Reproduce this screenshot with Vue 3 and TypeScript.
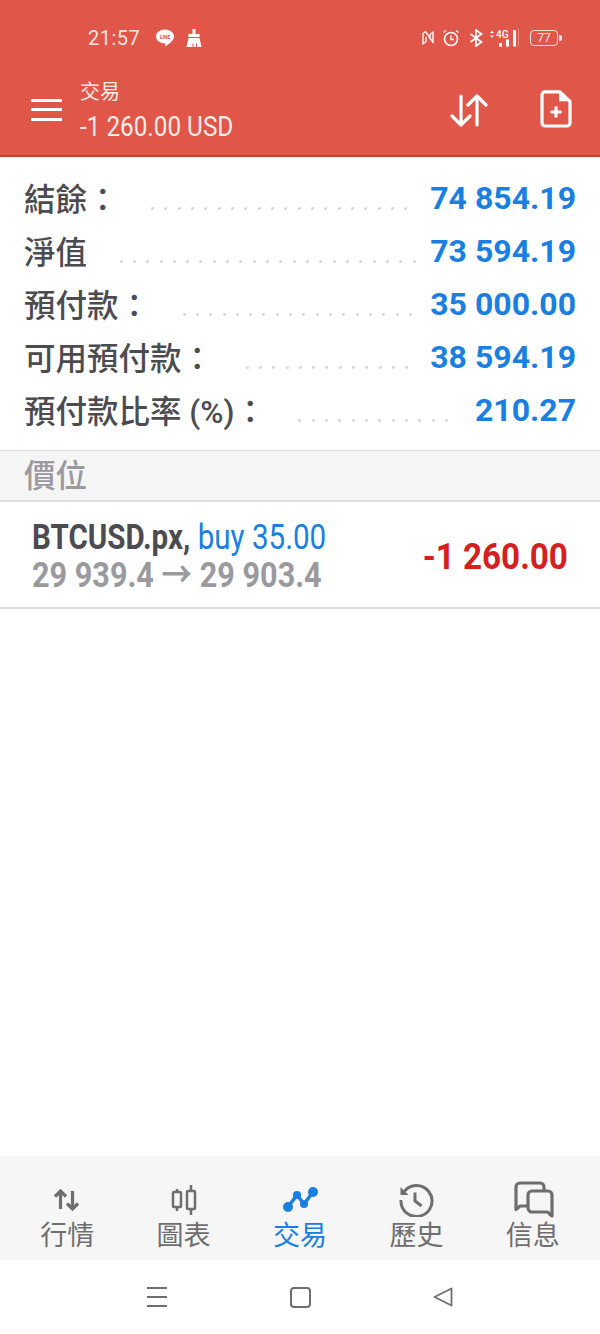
<script setup lang="ts">
interface Row {
  label: string
  value: string
  dots: number
}

const rows: Row[] = [
  { label: '結餘：', value: '74 854.19', dots: 20 },
  { label: '淨值', value: '73 594.19', dots: 23 },
  { label: '預付款：', value: '35 000.00', dots: 18 },
  { label: '可用預付款：', value: '38 594.19', dots: 13 },
  { label: '預付款比率 (%)：', value: '210.27', dots: 12 },
]
</script>

<template>
  <div class="screen">
    <header class="header">
      <div class="status">
        <span class="time">21:57</span>
        <svg class="st-line" viewBox="0 0 20 20" width="20" height="20">
          <path d="M10 1.500c5 0 9 3 9 7 0 3.800-4.500 7-8 9.500-.8.500-1 0-.8-1l.1-1.500C5 15.500 1 12.500 1 8.500c0-4 4-7 9-7z" fill="#fff" />
          <text x="10" y="10.500" text-anchor="middle" class="line-text">LINE</text>
        </svg>
        <svg class="st-brush" viewBox="0 0 16 20" width="16" height="20">
          <path d="M6.500 1h3v5h4v3h-11V6h4zM2.500 10h11l2 9H11v-3.500h-1V19H7.500v-3.500h-1V19H.5z" fill="#fff" />
        </svg>
        <div class="st-right">
          <svg viewBox="0 0 14 18" width="14" height="18" class="st-n">
            <path d="M2 4.500V15l3-2.500V8M2 4.500l2.500-2L12 13.500V3L9 5.500v5" fill="none" stroke="#fff" stroke-width="1.500" stroke-linejoin="round" opacity=".9" />
          </svg>
          <svg viewBox="0 0 18 18" width="18" height="18" class="st-alarm">
            <circle cx="9" cy="10" r="6.500" fill="none" stroke="#fff" stroke-width="1.600" />
            <path d="M9 6.500V10.500h3M1.500 3.500l2.500-2M16.500 3.500l-2.500-2" fill="none" stroke="#fff" stroke-width="1.400" />
          </svg>
          <svg viewBox="0 0 14 18" width="14" height="18" class="st-bt">
            <path d="M1.500 5l11 8-5.500 4V1l5.500 4-11 8" fill="none" stroke="#fff" stroke-width="1.700" />
          </svg>
          <div class="st-signal">
            <svg viewBox="0 0 32 20" width="32" height="20">
              <path d="M3 5l2-2.500L7 5zM3 7.500l2 2.500 2-2.500z" fill="#fff" />
              <text x="9" y="10" class="g-text">4G</text>
              <rect x="12" y="15" width="3" height="3.600" fill="#fff" />
              <rect x="19" y="11.500" width="3" height="7.100" fill="#fff" />
              <rect x="26" y="2" width="3" height="16.600" fill="#fff" />
              <rect x="31" y="1.500" width="1.500" height="17" fill="#fff" opacity=".3" />
            </svg>
          </div>
          <div class="battery"><span>77</span></div>
        </div>
      </div>
      <div class="toolbar">
        <div class="menu"><i></i><i></i><i></i></div>
        <div class="titles">
          <div class="title">交易</div>
          <div class="subtitle"><span class="narrow">-1 260.00 USD</span></div>
        </div>
        <svg class="act-sort" viewBox="0 0 38 34" width="38" height="34">
          <path d="M11 2v29M2 22l9 9 9-9M27 31V2M18 11l9-9 9 9" fill="none" stroke="#fff" stroke-width="3.200" stroke-linecap="round" stroke-linejoin="round" />
        </svg>
        <svg class="act-doc" viewBox="0 0 32 38" width="32" height="38">
          <path d="M5 1.800h15l10 9.500V33a3 3 0 0 1-3 3H5a3 3 0 0 1-3-3V4.800a3 3 0 0 1 3-3z" fill="none" stroke="#fff" stroke-width="3.200" stroke-linejoin="round" />
          <path d="M19 1.800l11 9.500H19z" fill="#fff" />
          <path d="M16 16.500v11M10.500 22h11" fill="none" stroke="#fff" stroke-width="3.200" />
        </svg>
      </div>
    </header>

    <section class="summary">
      <div v-for="row in rows" :key="row.label" class="row">
        <span class="label">{{ row.label }}</span>
        <span class="dots"><i v-for="n in row.dots" :key="n"></i></span>
        <span class="value">{{ row.value }}</span>
      </div>
    </section>

    <div class="section-title">價位</div>

    <div class="position">
      <div class="pos-left">
        <div class="pos-line"><span class="narrow"><b>BTCUSD.px,</b> <em>buy 35.00</em></span></div>
        <div class="pos-line prices"><span class="narrow">29 939.4 → 29 903.4</span></div>
      </div>
      <div class="profit"><span class="narrow right">-1 260.00</span></div>
    </div>

    <div class="spacer"></div>

    <nav class="tabs">
      <div class="tab">
        <div class="tab-icon">
          <svg viewBox="0 0 30 26" width="30" height="26">
            <path d="M8.500 22V4M3 9.500L8.500 4 14 9.500M20.500 4v18M15 16.500L20.500 22l5.500-5.500" fill="none" stroke="#6e6e6e" stroke-width="3.200" />
          </svg>
        </div>
        <span>行情</span>
      </div>
      <div class="tab">
        <div class="tab-icon">
          <svg viewBox="0 0 30 32" width="30" height="32">
            <path d="M8 5v22M22 1v30" stroke="#6e6e6e" stroke-width="2.500" />
            <rect x="4" y="8" width="8" height="15" rx="1" fill="#f6f6f6" stroke="#6e6e6e" stroke-width="2.500" />
            <rect x="18" y="7" width="8" height="18" rx="1" fill="#f6f6f6" stroke="#6e6e6e" stroke-width="2.500" />
          </svg>
        </div>
        <span>圖表</span>
      </div>
      <div class="tab active">
        <div class="tab-icon">
          <svg viewBox="0 0 36 28" width="36" height="28">
            <path d="M6 21L15 9l7 9L31 6" fill="none" stroke="#1a7fe0" stroke-width="3.500" />
            <circle cx="6" cy="21" r="5" fill="#1a7fe0" />
            <circle cx="15" cy="9" r="4" fill="#1a7fe0" />
            <circle cx="22" cy="18" r="4" fill="#1a7fe0" />
            <circle cx="31" cy="6" r="5" fill="#1a7fe0" />
          </svg>
        </div>
        <span>交易</span>
      </div>
      <div class="tab">
        <div class="tab-icon">
          <svg viewBox="0 0 36 34" width="36" height="34">
            <path d="M5.500 9.500A15.500 15.500 0 1 1 3 17" fill="none" stroke="#6e6e6e" stroke-width="3" />
            <path d="M2.500 4v8h8z" fill="#6e6e6e" />
            <path d="M17 9.500V18l6.500 5" fill="none" stroke="#6e6e6e" stroke-width="3" />
          </svg>
        </div>
        <span>歷史</span>
      </div>
      <div class="tab">
        <div class="tab-icon">
          <svg viewBox="0 0 42 38" width="42" height="38">
            <path d="M15 25H8l-4 3.500V6a4 4 0 0 1 4-4h20a4 4 0 0 1 4 4v3" fill="none" stroke="#6e6e6e" stroke-width="3.200" stroke-linejoin="round" />
            <path d="M20 10h16a4 4 0 0 1 4 4v21l-4.500-4H20a4 4 0 0 1-4-4V14a4 4 0 0 1 4-4z" fill="none" stroke="#6e6e6e" stroke-width="3.200" stroke-linejoin="round" />
          </svg>
        </div>
        <span>信息</span>
      </div>
    </nav>

    <div class="sysnav">
      <div class="sys-menu"><i></i><i></i><i></i></div>
      <div class="sys-home"></div>
      <svg viewBox="0 0 20 20" width="20" height="20">
        <path d="M1.500 10L18.500 1.500v17z" fill="none" stroke="#6e6e6e" stroke-width="1.800" stroke-linejoin="round" />
      </svg>
    </div>
  </div>
</template>

<style scoped>
.screen {
  width: 600px;
  height: 1334px;
  display: flex;
  flex-direction: column;
  background: #fff;
  font-family: Roboto, "Noto Sans CJK TC", sans-serif;
  overflow: hidden;
}
.header {
  background: #e05648;
  border-bottom: 2px solid #c23d33;
  height: 157px;
  box-sizing: border-box;
  color: #fff;
}
.status {
  height: 76px;
  display: flex;
  align-items: center;
  padding-left: 88px;
  padding-right: 42px;
}
.time {
  font-size: 20px;
  letter-spacing: 0.5px;
  color: #fbe6e3;
  margin-right: 15px;
}
.st-line {
  margin-right: 11px;
}
.line-text {
  font-size: 5px;
  font-weight: 700;
  fill: #e05648;
}
.st-right {
  margin-left: auto;
  display: flex;
  align-items: center;
}
.st-n {
  margin-right: 7.5px;
}
.st-alarm {
  margin-right: 8.5px;
}
.st-bt {
  margin-right: 4.5px;
}
.st-signal {
  display: flex;
  margin-right: 11px;
}
.g-text {
  font-size: 10px;
  font-weight: 500;
  fill: #fff;
}
.battery {
  width: 26px;
  height: 14px;
  border: 1.5px solid #fbe6e3;
  border-radius: 4px;
  display: flex;
  align-items: center;
  justify-content: center;
  font-size: 12px;
  color: #fbe6e3;
  position: relative;
}
.battery::after {
  content: "";
  position: absolute;
  right: -5px;
  top: 4px;
  width: 3px;
  height: 6px;
  background: #fbe6e3;
  border-radius: 0 2px 2px 0;
}
.toolbar {
  height: 79px;
  display: flex;
  align-items: center;
  padding-left: 31px;
  padding-right: 28px;
}
.menu {
  width: 31px;
  display: flex;
  flex-direction: column;
  gap: 6.5px;
  margin-right: 18px;
  margin-bottom: 12px;
}
.menu i {
  display: block;
  height: 3px;
  background: #fff;
}
.titles {
  flex: 1;
  margin-bottom: 10px;
}
.title {
  font-size: 20px;
  line-height: 33px;
  color: #fdecea;
}
.subtitle {
  font-size: 27px;
  line-height: 36px;
  color: #fdecea;
}
.narrow {
  display: inline-block;
  white-space: nowrap;
  transform: scaleX(0.845);
  transform-origin: left center;
}
.narrow.right {
  transform-origin: right center;
}
.subtitle .narrow {
  transform: scaleX(0.9);
}
.act-sort {
  margin-right: 52px;
  margin-bottom: 10px;
}
.act-doc {
  margin-bottom: 13px;
}
.summary {
  padding: 16px 24px 12px;
}
.row {
  height: 53px;
  display: flex;
  align-items: center;
}
.label {
  font-size: 31.5px;
  font-weight: 500;
  color: #4c4c50;
  white-space: nowrap;
  margin-bottom: 6px;
}
.dots {
  flex: 1;
  display: flex;
  gap: 10.33px;
  margin-left: 32.5px;
  margin-top: 17px;
}
.dots i {
  display: block;
  width: 3px;
  height: 3px;
  flex: none;
  background: #d6d6d6;
  border-radius: 50%;
}
.value {
  font-size: 32px;
  font-weight: 700;
  color: #1a7fe0;
  white-space: nowrap;
  margin-bottom: 4px;
}
.section-title {
  height: 52px;
  box-sizing: border-box;
  background: #f5f5f5;
  border-top: 1px solid #e0e0e0;
  border-bottom: 2px solid #e0e0e0;
  padding-left: 24px;
  font-size: 31.5px;
  font-weight: 500;
  line-height: 52px;
  color: #9a9a9e;
}
.position {
  height: 107px;
  box-sizing: border-box;
  border-bottom: 2px solid #e0e0e0;
  display: flex;
  align-items: center;
  justify-content: space-between;
  padding: 4px 32px 0;
}
.pos-line {
  font-size: 35px;
  line-height: 38px;
  white-space: nowrap;
}
.pos-line b {
  color: #4c4c50;
}
.pos-line em {
  font-style: normal;
  color: #1a7fe0;
}
.prices {
  font-weight: 700;
  color: #9a9a9e;
}
.prices .narrow {
  transform: scaleX(0.875);
}
.profit {
  font-size: 37px;
  font-weight: 700;
  color: #d42020;
}
.profit .narrow {
  transform: scaleX(0.897);
}
.spacer {
  flex: 1;
}
.tabs {
  height: 104px;
  background: #f6f6f6;
  display: grid;
  grid-template-columns: repeat(5, 1fr);
  padding: 0 9px;
  box-sizing: border-box;
}
.tab {
  display: flex;
  flex-direction: column;
  align-items: center;
  justify-content: flex-end;
  padding-bottom: 8px;
  font-size: 27px;
  line-height: 32px;
  color: #6e6e6e;
}
.tab-icon {
  height: 40px;
  display: flex;
  align-items: center;
  justify-content: center;
}
.tab-icon svg {
  display: block;
}
.tab.active {
  color: #1a7fe0;
}
.sysnav {
  height: 74px;
  display: flex;
  align-items: center;
  padding: 0 147px 0 147px;
  justify-content: space-between;
}
.sys-menu {
  width: 20px;
  display: flex;
  flex-direction: column;
  gap: 7px;
}
.sys-menu i {
  display: block;
  height: 2px;
  background: #6e6e6e;
}
.sys-home {
  width: 17px;
  height: 17px;
  border: 2px solid #6e6e6e;
  border-radius: 4px;
}
</style>
